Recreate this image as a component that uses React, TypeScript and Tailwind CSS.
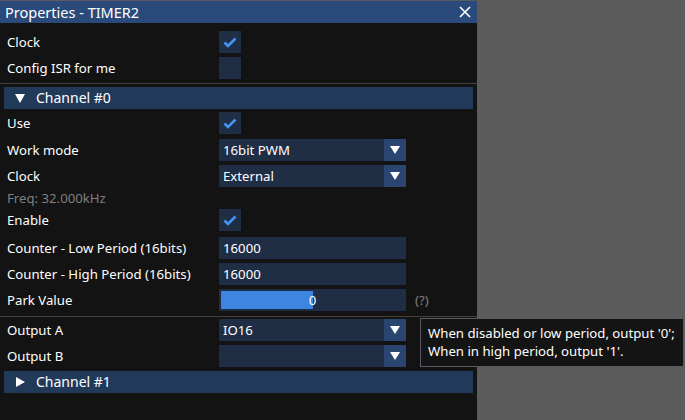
const font = { fontFamily: '"Noto Sans", "Open Sans", sans-serif' };

function Check({ on }: { on?: boolean }) {
  return (
    <div className="flex items-center justify-center w-[22px] h-[22px] bg-[#1f2d45]">
      {on && (
        <svg width="16" height="16" viewBox="0 0 16 16">
          <path d="M2.5 8.5 L6 12 L13.5 4.5" fill="none" stroke="#4296fa" strokeWidth="2.6" />
        </svg>
      )}
    </div>
  );
}

function Combo({ value }: { value: string }) {
  return (
    <div className="flex w-[187px] h-[22px] bg-[#1f2d45]">
      <div className="flex-1 flex items-center pl-[4px] text-white">{value}</div>
      <div className="flex items-center justify-center w-[22px] h-[22px] bg-[#2a4670]">
        <svg width="12" height="10" viewBox="0 0 12 10">
          <path d="M1 1 L11 1 L6 9 Z" fill="#ffffff" />
        </svg>
      </div>
    </div>
  );
}

function Input({ value }: { value: string }) {
  return (
    <div className="flex items-center w-[187px] h-[22px] bg-[#1f2d45] pl-[4px] text-white">{value}</div>
  );
}

function Row({ label, mt, children }: { label: string; mt: string; children?: React.ReactNode }) {
  return (
    <div className={`flex items-center h-[22px] ${mt}`}>
      <div className="w-[219px] pl-[7px] text-white whitespace-nowrap">{label}</div>
      {children}
    </div>
  );
}

function Header({ label, open, mt }: { label: string; open?: boolean; mt: string }) {
  return (
    <div className={`flex items-center h-[22px] mx-[4px] bg-[#223a5a] text-white ${mt}`}>
      <div className="w-[32px] flex justify-center">
        <svg width="12" height="12" viewBox="0 0 12 12">
          {open ? <path d="M1 2 L11 2 L6 11 Z" fill="#fff" /> : <path d="M2 1 L11 6 L2 11 Z" fill="#fff" />}
        </svg>
      </div>
      <span className="text-[14px]">{label}</span>
    </div>
  );
}

function Sep({ mt }: { mt: string }) {
  return <div className={`h-[1px] bg-[#45423c] ${mt}`} />;
}

export default function App() {
  return (
    <div className="relative w-[685px] h-[420px] bg-[#5c5c5c] text-[13.2px] leading-[18px]" style={font}>
      <div className="w-[478px] h-[420px] bg-[#131313] border-r border-t border-[#5a5a66] flex flex-col">
        <div className="flex items-center justify-between h-[22px] bg-[#294a7a] pl-[5px] pr-[6px] text-white text-[14.5px]">
          <span>Properties - TIMER2</span>
          <svg width="12" height="12" viewBox="0 0 12 12">
            <path d="M1 1 L11 11 M11 1 L1 11" stroke="#fff" strokeWidth="1.6" />
          </svg>
        </div>
        <div className="flex flex-col">
          <Row label="Clock" mt="mt-[8px]"><Check on /></Row>
          <Row label="Config ISR for me" mt="mt-[4px]"><Check /></Row>
          <Sep mt="mt-[4px]" />
          <Header label="Channel #0" open mt="mt-[3px]" />
          <Row label="Use" mt="mt-[3px]"><Check on /></Row>
          <Row label="Work mode" mt="mt-[5px]"><Combo value="16bit PWM" /></Row>
          <Row label="Clock" mt="mt-[4px]"><Combo value="External" /></Row>
          <div className="mt-[4px] pl-[7px] h-[14px] leading-[14px] text-[#7f7f7f]">Freq: 32.000kHz</div>
          <Row label="Enable" mt="mt-[4px]"><Check on /></Row>
          <Row label="Counter - Low Period (16bits)" mt="mt-[6px]"><Input value="16000" /></Row>
          <Row label="Counter - High Period (16bits)" mt="mt-[4px]"><Input value="16000" /></Row>
          <Row label="Park Value" mt="mt-[4px]">
            <div className="relative flex items-center justify-center w-[187px] h-[22px] bg-[#1f2d45] text-white">
              <div className="absolute left-[2px] top-[2px] w-[92px] h-[18px] bg-[#3d85e0]" />
              <span className="relative">0</span>
            </div>
            <span className="ml-[9px] text-[#7f7f7f]">(?)</span>
          </Row>
          <Sep mt="mt-[5px]" />
          <Row label="Output A" mt="mt-[2px]"><Combo value="IO16" /></Row>
          <Row label="Output B" mt="mt-[4px]"><Combo value="" /></Row>
          <Header label="Channel #1" mt="mt-[4px]" />
        </div>
      </div>
      <div className="absolute left-[420px] top-[318px] w-[264px] h-[49px] bg-[#141414] border border-[#5a5a66] px-[7px] py-[5px] text-white leading-[18px] whitespace-nowrap">
        <div>When disabled or low period, output '0';</div>
        <div>When in high period, output '1'.</div>
      </div>
    </div>
  );
}
